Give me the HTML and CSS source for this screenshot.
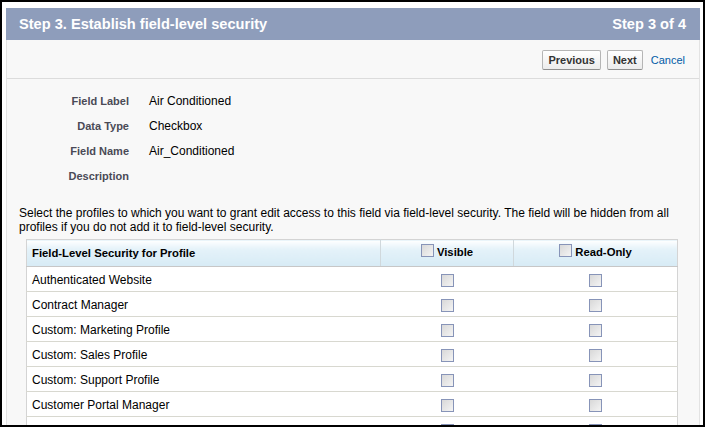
FILE: index.html
```html
<!DOCTYPE html>
<html>
<head>
<meta charset="utf-8">
<link rel="stylesheet" href="styles.css">
</head>
<body>
<div class="frame">
  <div class="panel">
    <div class="wiz-header">
      <span class="wiz-title">Step 3. Establish field-level security</span>
      <span class="wiz-step">Step 3 of 4</span>
    </div>
    <div class="btn-row">
      <button class="btn">Previous</button>
      <button class="btn">Next</button>
      <a class="cancel" href="#">Cancel</a>
    </div>
    <div class="details">
      <div class="drow"><span class="dlabel">Field Label</span><span class="dval">Air Conditioned</span></div>
      <div class="drow"><span class="dlabel">Data Type</span><span class="dval">Checkbox</span></div>
      <div class="drow"><span class="dlabel">Field Name</span><span class="dval">Air_Conditioned</span></div>
      <div class="drow"><span class="dlabel">Description</span><span class="dval"></span></div>
    </div>
    <div class="section">
      <p class="intro">Select the profiles to which you want to grant edit access to this field via field-level security. The field will be hidden from all profiles if you do not add it to field-level security.</p>
      <table class="fls">
        <thead>
          <tr>
            <th class="c1">Field-Level Security for Profile</th>
            <th class="c2"><span class="hcell"><span class="cb"></span>Visible</span></th>
            <th class="c3"><span class="hcell"><span class="cb"></span>Read-Only</span></th>
          </tr>
        </thead>
        <tbody>
          <tr><td class="c1">Authenticated Website</td><td class="c2"><span class="cb"></span></td><td class="c3"><span class="cb"></span></td></tr>
          <tr><td class="c1">Contract Manager</td><td class="c2"><span class="cb"></span></td><td class="c3"><span class="cb"></span></td></tr>
          <tr><td class="c1">Custom: Marketing Profile</td><td class="c2"><span class="cb"></span></td><td class="c3"><span class="cb"></span></td></tr>
          <tr><td class="c1">Custom: Sales Profile</td><td class="c2"><span class="cb"></span></td><td class="c3"><span class="cb"></span></td></tr>
          <tr><td class="c1">Custom: Support Profile</td><td class="c2"><span class="cb"></span></td><td class="c3"><span class="cb"></span></td></tr>
          <tr><td class="c1">Customer Portal Manager</td><td class="c2"><span class="cb"></span></td><td class="c3"><span class="cb"></span></td></tr>
          <tr><td class="c1">High Volume Customer Portal</td><td class="c2"><span class="cb"></span></td><td class="c3"><span class="cb"></span></td></tr>
        </tbody>
      </table>
    </div>
  </div>
</div>
</body>
</html>
```

FILE: styles.css
```css
html, body {
  margin: 0;
  padding: 0;
  background: #ffffff;
}
.frame {
  width: 705px;
  height: 427px;
  box-sizing: border-box;
  border: 2px solid #000;
  background: #ffffff;
  padding: 6px 3px 0 4px;
  overflow: hidden;
  font-family: "Liberation Sans", Arial, sans-serif;
}
.panel {
  background: #f8f8f8;
  border-left: 1px solid #e3e3e3;
  border-right: 1px solid #e3e3e3;
  height: 100%;
}
.wiz-header {
  background: #8e9dbb;
  height: 32px;
  margin-left: -1px;
  margin-right: -1px;
  display: flex;
  align-items: center;
  justify-content: space-between;
  padding: 0 14px 0 13px;
  color: #ffffff;
  font-weight: bold;
  font-size: 14.6px;
}
.btn-row {
  display: flex;
  justify-content: flex-end;
  align-items: center;
  height: 39px;
  border-bottom: 1px solid #dcdcdc;
  padding-right: 14px;
  padding-top: 1px;
  box-sizing: border-box;
}
.btn {
  height: 20px;
  box-sizing: border-box;
  font-family: "Liberation Sans", Arial, sans-serif;
  font-size: 11px;
  font-weight: bold;
  color: #333;
  background: linear-gradient(#ffffff, #ececec);
  border: 1px solid #b5b5b5;
  border-bottom-color: #8f8f8f;
  border-radius: 2px;
  padding: 0 5px;
  margin-left: 6px;
}
.cancel {
  color: #015ba7;
  font-size: 11px;
  text-decoration: none;
  margin-left: 8px;
}
.details {
  padding-top: 9px;
}
.drow {
  display: flex;
  align-items: center;
  height: 25px;
}
.dlabel {
  width: 122px;
  text-align: right;
  font-size: 11px;
  font-weight: bold;
  color: #4a4a56;
}
.dval {
  margin-left: 20px;
  font-size: 12px;
  color: #000;
}
.section {
  padding: 18px 12px 0 12px;
}
.intro {
  margin: 0;
  font-size: 12px;
  line-height: 14px;
  color: #000;
}
.fls {
  margin: 5px 0 0 7px;
  width: 652px;
  border-collapse: collapse;
  background: #ffffff;
  border: 1px solid #d4d4d4;
  table-layout: fixed;
  font-size: 12px;
}
.fls th {
  height: 26px;
  padding: 0 5px;
  font-size: 11.3px;
  font-weight: bold;
  color: #000;
  background: linear-gradient(#ffffff 0%, #e4f2f9 35%, #d7ebf5 100%);
  border-bottom: 1px solid #c7c7c7;
  border-left: 1px solid #d0d8dc;
}
.fls th.c1 {
  text-align: left;
  border-left: none;
}
.fls .c1 { width: 343px; }
.fls .c2 { width: 122px; }
.fls td {
  height: 23px;
  padding: 1px 5px 0 5px;
  border-bottom: 1px solid #d8d8d0;
  color: #000;
}
.fls td.c2, .fls td.c3 {
  text-align: center;
}
.hcell {
  display: inline-flex;
  align-items: center;
  gap: 3px;
}
.hcell .cb {
  position: relative;
  top: -2px;
}
.cb {
  display: inline-block;
  width: 13px;
  height: 13px;
  box-sizing: border-box;
  border: 1px solid #8794b8;
  background: linear-gradient(135deg, #d8d8d8, #f4f4f4);
  vertical-align: middle;
}
```
